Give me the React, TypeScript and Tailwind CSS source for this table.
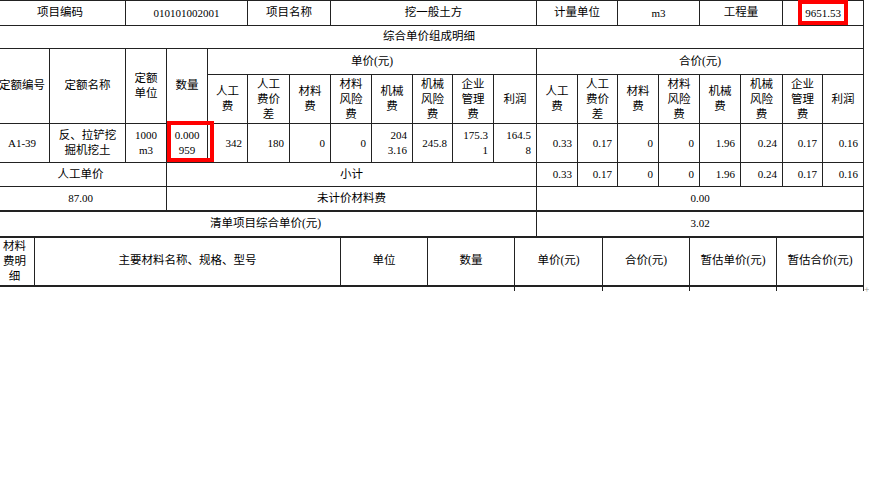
import React from "react";

// grid columns of the main sheet, first one starts 6px off the left edge
const mainCols = [
  "w-[55px]", "w-[76px]", "w-[41px]", "w-[41px]",
  "w-[40px]", "w-[42px]", "w-[41px]", "w-[41px]", "w-[41px]", "w-[40px]", "w-[41px]", "w-[43px]",
  "w-[41px]", "w-[40px]", "w-[41px]", "w-[41px]", "w-[41px]", "w-[42px]", "w-[40px]", "w-[41px]",
];
const matCols = ["w-[40px]", "w-[306px]", "w-[87px]", "w-[87px]", "w-[88px]", "w-[87px]", "w-[87px]", "w-[87px]"];

const feeHeads = [
  ["人工", "费"],
  ["人工", "费价", "差"],
  ["材料", "费"],
  ["材料", "风险", "费"],
  ["机械", "费"],
  ["机械", "风险", "费"],
  ["企业", "管理", "费"],
  ["利润"],
];

const unitValues = [["342"], ["180"], ["0"], ["0"], ["204", "3.16"], ["245.8"], ["175.3", "1"], ["164.5", "8"]];
const totalValues = ["0.33", "0.17", "0", "0", "1.96", "0.24", "0.17", "0.16"];

function C({
  children,
  className = "",
  colSpan,
  rowSpan,
}: {
  children?: React.ReactNode;
  className?: string;
  colSpan?: number;
  rowSpan?: number;
}) {
  return (
    <td
      colSpan={colSpan}
      rowSpan={rowSpan}
      className={`border border-[#222] p-0 text-center align-middle ${className}`}
    >
      {children}
    </td>
  );
}

function Lines({ lines }: { lines: string[] }) {
  return (
    <div className="leading-[15px]">
      {lines.map((l, i) => (
        <div key={i}>{l}</div>
      ))}
    </div>
  );
}

const num = "text-[11px] text-right pr-[5px]";

export default function App() {
  return (
    <div className="relative w-[869px] h-[503px] overflow-hidden bg-white text-black text-[11.5px] font-['Liberation_Serif','Noto_Sans_CJK_SC',serif]">
      <div className="ml-[-6px] w-[869px]">
        <table className="w-[869px] table-fixed">
          <colgroup>
            {mainCols.map((w, i) => (
              <col key={i} className={w} />
            ))}
          </colgroup>
          <tbody>
            <tr>
              <C colSpan={2} className="h-[25px]">项目编码</C>
              <C colSpan={3} className="text-[11px]">010101002001</C>
              <C colSpan={2}>项目名称</C>
              <C colSpan={5}>挖一般土方</C>
              <C colSpan={2}>计量单位</C>
              <C colSpan={2} className="text-[11px]">m3</C>
              <C colSpan={2}>工程量</C>
              <C colSpan={2} className="text-[11px]">9651.53</C>
            </tr>
            <tr>
              <C colSpan={20} className="h-[23px]">综合单价组成明细</C>
            </tr>
            <tr>
              <C rowSpan={2}>定额编号</C>
              <C rowSpan={2}>定额名称</C>
              <C rowSpan={2}>
                <Lines lines={["定额", "单位"]} />
              </C>
              <C rowSpan={2}>数量</C>
              <C colSpan={8} className="h-[26px]">单价(元)</C>
              <C colSpan={8}>合价(元)</C>
            </tr>
            <tr>
              {[...feeHeads, ...feeHeads].map((h, i) => (
                <C key={i} className="h-[49px]">
                  <Lines lines={h} />
                </C>
              ))}
            </tr>
            <tr>
              <C className="h-[39px] text-[11px]">A1-39</C>
              <C>
                <Lines lines={["反、拉铲挖", "掘机挖土"]} />
              </C>
              <C className="text-[11px]">
                <Lines lines={["1000", "m3"]} />
              </C>
              <C className="text-[11px]">
                <Lines lines={["0.000", "959"]} />
              </C>
              {unitValues.map((v, i) => (
                <C key={i} className={num}>
                  <Lines lines={v} />
                </C>
              ))}
              {totalValues.map((v, i) => (
                <C key={i} className={num}>
                  {v}
                </C>
              ))}
            </tr>
            <tr>
              <C colSpan={3} className="h-[24px]">人工单价</C>
              <C colSpan={9}>小计</C>
              {totalValues.map((v, i) => (
                <C key={i} className={num}>
                  {v}
                </C>
              ))}
            </tr>
            <tr>
              <C colSpan={3} className="h-[24px] text-[11px]">87.00</C>
              <C colSpan={9}>未计价材料费</C>
              <C colSpan={8} className="text-[11px]">0.00</C>
            </tr>
            <tr>
              <C colSpan={12} className="h-[26px] border-t-2 border-b-2">清单项目综合单价(元)</C>
              <C colSpan={8} className="text-[11px] border-t-2 border-b-2">3.02</C>
            </tr>
          </tbody>
        </table>

        <table className="w-[869px] table-fixed">
          <colgroup>
            {matCols.map((w, i) => (
              <col key={i} className={w} />
            ))}
          </colgroup>
          <tbody>
            <tr>
              <C className="h-[48px] border-t-0 border-b-2">
                <Lines lines={["材料", "费明", "细"]} />
              </C>
              <C className="border-t-0 border-b-2">主要材料名称、规格、型号</C>
              <C className="border-t-0 border-b-2">单位</C>
              <C className="border-t-0 border-b-2">数量</C>
              <C className="border-t-0 border-b-2">单价(元)</C>
              <C className="border-t-0 border-b-2">合价(元)</C>
              <C className="border-t-0 border-b-2">暂估单价(元)</C>
              <C className="border-t-0 border-b-2">暂估合价(元)</C>
            </tr>
            <tr>
              <td className="h-[5px] p-0" />
              <td className="p-0" />
              <td className="p-0" />
              <td className="p-0" />
              <td className="p-0 border-l border-[#222]" />
              <td className="p-0 border-l border-[#222]" />
              <td className="p-0 border-l border-[#222]" />
              <td className="p-0 border-x border-[#222]" />
            </tr>
          </tbody>
        </table>
      </div>

      {/* highlight boxes */}
      <div className="absolute left-[798px] top-0 w-[50px] h-[25px] border-4 border-[#f00]" />
      <div className="absolute left-[167px] top-[121px] w-[47px] h-[41px] border-4 border-[#f00]" />
      <span className="absolute left-[864px] top-[285px] text-[10px] leading-none text-[#999]">+</span>
    </div>
  );
}
